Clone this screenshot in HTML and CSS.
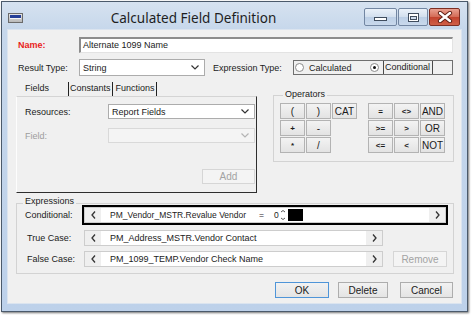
FILE: index.html
```html
<!DOCTYPE html>
<html lang="en">
<head>
    <meta charset="UTF-8">
    <title>Calculated Field Definition</title>
    <link rel="stylesheet" href="styles.css">
</head>
<body>
    <div class="window">
        <div class="titlebar">
            <div class="app-icon"><span></span></div>
            <div class="title">Calculated Field Definition</div>
            <div class="caption-btns">
                <div class="cap-btn cap-min">
                    <svg width="13" height="4"><rect x="0.5" y="0.5" width="12" height="3" fill="#fff" stroke="#404d5e"/></svg>
                </div>
                <div class="cap-btn cap-max">
                    <svg width="11" height="9"><rect x="0.5" y="0.5" width="10" height="8" fill="#fff" stroke="#404d5e"/><rect x="2.5" y="3.5" width="6" height="3" fill="#cfdcec" stroke="#404d5e"/></svg>
                </div>
                <div class="cap-btn cap-close">
                    <svg width="16" height="12"><path d="M3 2 L13 10 M13 2 L3 10" stroke="#5b1c12" stroke-width="4.2" stroke-linecap="round"/><path d="M3 2 L13 10 M13 2 L3 10" stroke="#fff" stroke-width="2.4" stroke-linecap="round"/></svg>
                </div>
            </div>
        </div>

        <div class="content">
            <div class="form-row name-row">
                <label class="form-label required">Name:</label>
                <div class="textbox">Alternate 1099 Name</div>
            </div>

            <div class="form-row type-row">
                <label class="form-label">Result Type:</label>
                <div class="dropdown type-select">
                    <span>String</span>
                    <svg width="8" height="5"><polyline points="0.5,0.5 4,4 7.5,0.5" fill="none" stroke="#333" stroke-width="1.2"/></svg>
                </div>
                <label class="expr-type-label">Expression Type:</label>
                <div class="radio-group">
                    <div class="radio-opt first">
                        <span class="radio"></span>
                        <span class="radio-text">Calculated</span>
                    </div>
                    <div class="radio-opt">
                        <span class="radio checked"></span>
                        <span class="radio-text framed">Conditional</span>
                    </div>
                </div>
            </div>

            <div class="middle">
                <div class="tabs-col">
                    <div class="tab-strip">
                        <span class="tab tab-active">Fields</span>
                        <span class="tab tab-constants">Constants</span>
                        <span class="tab tab-functions">Functions</span>
                    </div>
                    <div class="tab-panel">
                        <div class="panel-row">
                            <label class="panel-label">Resources:</label>
                            <div class="dropdown panel-select">
                                <span>Report Fields</span>
                                <svg width="8" height="5"><polyline points="0.5,0.5 4,4 7.5,0.5" fill="none" stroke="#333" stroke-width="1.2"/></svg>
                            </div>
                        </div>
                        <div class="panel-row field-row">
                            <label class="panel-label muted">Field:</label>
                            <div class="dropdown panel-select disabled-select">
                                <span></span>
                                <svg width="8" height="5"><polyline points="0.5,0.5 4,4 7.5,0.5" fill="none" stroke="#b4b4b4" stroke-width="1.2"/></svg>
                            </div>
                        </div>
                        <div class="panel-actions">
                            <button class="btn btn-disabled add-btn" disabled>Add</button>
                        </div>
                    </div>
                </div>

                <div class="group operators">
                    <span class="legend">Operators</span>
                    <div class="op-grid">
                        <button class="op">(</button>
                        <button class="op">)</button>
                        <button class="op word">CAT</button>
                        <span></span>
                        <button class="op sym">=</button>
                        <button class="op sym">&lt;&gt;</button>
                        <button class="op word">AND</button>

                        <button class="op sym">+</button>
                        <button class="op">-</button>
                        <span></span>
                        <span></span>
                        <button class="op sym">&gt;=</button>
                        <button class="op sym">&gt;</button>
                        <button class="op word">OR</button>

                        <button class="op sym">*</button>
                        <button class="op">/</button>
                        <span></span>
                        <span></span>
                        <button class="op sym">&lt;=</button>
                        <button class="op sym">&lt;</button>
                        <button class="op word">NOT</button>
                    </div>
                </div>
            </div>

            <div class="group expressions">
                <span class="legend">Expressions</span>
                <div class="expr-row">
                    <label class="expr-label">Conditional:</label>
                    <div class="expr-box cond-box">
                        <span class="expr-arrow"><svg width="5" height="8"><polyline points="4,0.5 1,4 4,7.5" fill="none" stroke="#333" stroke-width="1.3"/></svg></span>
                        <span class="expr-text cond-text">PM_Vendor_MSTR.Revalue Vendor<span class="op-eq">=</span><span class="op-val">0</span><svg class="spin" width="6" height="12"><path d="M1 3 L3 1.5 L5 3 M1 9 L3 10.5 L5 9" fill="none" stroke="#444" stroke-width="0.9"/></svg><span class="caret-block"></span></span>
                        <span class="expr-arrow"><svg width="5" height="8"><polyline points="1,0.5 4,4 1,7.5" fill="none" stroke="#333" stroke-width="1.3"/></svg></span>
                    </div>
                </div>
                <div class="expr-row true-row">
                    <label class="expr-label indent">True Case:</label>
                    <div class="expr-box case-box">
                        <span class="expr-arrow"><svg width="5" height="8"><polyline points="4,0.5 1,4 4,7.5" fill="none" stroke="#333" stroke-width="1.3"/></svg></span>
                        <span class="expr-text">PM_Address_MSTR.Vendor Contact</span>
                        <span class="expr-arrow"><svg width="5" height="8"><polyline points="1,0.5 4,4 1,7.5" fill="none" stroke="#333" stroke-width="1.3"/></svg></span>
                    </div>
                </div>
                <div class="expr-row false-row">
                    <label class="expr-label indent">False Case:</label>
                    <div class="expr-box case-box">
                        <span class="expr-arrow"><svg width="5" height="8"><polyline points="4,0.5 1,4 4,7.5" fill="none" stroke="#333" stroke-width="1.3"/></svg></span>
                        <span class="expr-text">PM_1099_TEMP.Vendor Check Name</span>
                        <span class="expr-arrow"><svg width="5" height="8"><polyline points="1,0.5 4,4 1,7.5" fill="none" stroke="#333" stroke-width="1.3"/></svg></span>
                    </div>
                    <button class="btn btn-disabled remove-btn" disabled>Remove</button>
                </div>
            </div>

            <div class="dialog-buttons">
                <button class="btn btn-default ok-btn">OK</button>
                <button class="btn delete-btn">Delete</button>
                <button class="btn cancel-btn">Cancel</button>
            </div>
        </div>
    </div>
</body>
</html>
```

FILE: styles.css
```css
* {
    box-sizing: border-box;
}
body {
    margin: 0;
    width: 473px;
    height: 315px;
    overflow: hidden;
    background-color: #fff;
    font-family: "Liberation Sans", Arial, sans-serif;
    font-size: 9px;
    color: #1b1b1b;
}

/* window frame */
.window {
    margin: 1px 0 0 1px;
    width: 467px;
    height: 311px;
    border: 1px solid #4b5a6b;
    padding: 0 5px 7px 5px;
    display: flex;
    flex-direction: column;
    background: linear-gradient(to bottom, #d6e2f0 0, #c6d7eb 28px, #bdd1ea 100%);
    box-shadow: 1px 1px 2px rgba(0, 0, 0, 0.55);
}
.titlebar {
    height: 27px;
    padding-top: 5px;
    display: flex;
    align-items: center;
}
.app-icon {
    width: 15px;
    height: 10px;
    margin-left: 1px;
    border: 1px solid #6b6b6b;
    background: linear-gradient(#e4e4e4, #b9b9b9);
    padding: 1px 1px 0 1px;
}
.app-icon span {
    display: block;
    height: 3px;
    background-color: #253f98;
    border-bottom: 1px solid #f4f4f4;
    box-sizing: content-box;
}
.title {
    flex: 1;
    text-align: center;
    font-family: "Noto Sans", "Open Sans", sans-serif;
    font-size: 13.5px;
    color: #1e1e1e;
    line-height: 18px;
}
.caption-btns {
    align-self: flex-start;
    margin-top: 1px;
    margin-right: 2px;
    display: flex;
    gap: 1px;
}
.cap-btn {
    height: 18px;
    display: flex;
    align-items: center;
    justify-content: center;
    border: 1px solid #7286a2;
    border-radius: 2px;
    background: linear-gradient(#eaf1f9, #d2dfee 50%, #bccfe6 51%, #c9d9ec);
}
.cap-min {
    width: 33px;
    padding-top: 4px;
}
.cap-max {
    width: 30px;
}
.cap-close {
    width: 31px;
    border-color: #7d2f24;
    background: linear-gradient(#e9a090, #d36a55 50%, #c2432e 51%, #cf5f47);
}

/* dialog body */
.content {
    flex: 1;
    background-color: #f0f0f0;
    border: 1px solid #dbe4ef;
    padding: 0 7px 0 8px;
}
.form-row {
    display: flex;
    align-items: center;
}
.name-row {
    margin-top: 7px;
    height: 16px;
}
.type-row {
    margin-top: 6px;
    height: 17px;
}
.form-label {
    width: 63px;
    padding-left: 2px;
}
.required {
    color: #e8221c;
    font-weight: bold;
}
.textbox {
    width: 374px;
    height: 16px;
    background-color: #fff;
    border-style: solid;
    border-width: 2px 1px 1px 2px;
    border-color: #8c8c8c #e3e3e3 #e3e3e3 #8c8c8c;
    padding-left: 2px;
    line-height: 13px;
}
.dropdown {
    display: flex;
    align-items: center;
    justify-content: space-between;
    background-color: #fff;
    border: 1px solid #acacac;
    padding: 0 5px 0 3px;
}
.type-select {
    width: 126px;
    height: 17px;
}
.expr-type-label {
    margin-left: 8px;
    width: 80px;
}
.radio-group {
    width: 160px;
    height: 15px;
    border: 1px solid #6f6f6f;
    padding-left: 1px;
    display: flex;
}
.radio-opt {
    display: flex;
    align-items: center;
}
.radio-opt.first {
    width: 75px;
}
.radio {
    width: 9px;
    height: 9px;
    border-radius: 50%;
    border: 1px solid #8b8b8b;
    background-color: #fff;
    display: flex;
    align-items: center;
    justify-content: center;
}
.radio.checked::after {
    content: "";
    width: 3px;
    height: 3px;
    border-radius: 50%;
    background-color: #111;
}
.radio-text {
    margin-left: 5px;
}
.radio-text.framed {
    margin-left: 4px;
    align-self: stretch;
    width: 50px;
    line-height: 13px;
    padding-left: 1px;
    border-left: 1px solid #4a4a4a;
    border-right: 1px solid #4a4a4a;
}

/* tabs + operators */
.middle {
    margin-top: 4px;
    display: flex;
    gap: 16px;
}
.tabs-col {
    width: 241px;
}
.tab-strip {
    height: 16px;
    display: flex;
    align-items: flex-end;
}
.tab {
    height: 14px;
    line-height: 13px;
}
.tab-active {
    width: 52px;
    padding-left: 9px;
}
.tab-constants {
    padding: 0 1px;
    border-left: 1px solid #222;
    border-right: 1px solid #222;
}
.tab-functions {
    padding: 0 1px 0 3px;
    border-right: 1px solid #222;
}
.tab-panel {
    height: 97px;
    border-style: solid;
    border-width: 1px;
    border-color: #d4d4d4 #2e2e2e #2e2e2e #fdfdfd;
    padding: 7px 1px 0 8px;
}
.panel-row {
    display: flex;
    align-items: center;
    height: 15px;
}
.field-row {
    margin-top: 9px;
}
.panel-label {
    width: 83px;
}
.muted {
    color: #9d9d9d;
}
.panel-select {
    width: 147px;
    height: 15px;
}
.disabled-select {
    background-color: #f4f4f4;
    border-color: #d9d9d9;
}
.panel-actions {
    margin-top: 26px;
    display: flex;
    justify-content: flex-end;
}

.group {
    position: relative;
    border: 1px solid #d3d3d3;
}
.legend {
    position: absolute;
    left: 9px;
    top: -7px;
    padding: 0 2px;
    line-height: 11px;
    background-color: #f0f0f0;
}
.operators {
    width: 181px;
    height: 67px;
    margin-top: 15px;
    padding: 7px 0 0 6px;
}
.op-grid {
    display: grid;
    grid-template-columns: 25px 25px 25px 9px 25px 25px 25px;
    grid-auto-rows: 16px;
    column-gap: 1px;
    row-gap: 1px;
}
.op {
    padding: 0;
    border: 1px solid #b3b3b3;
    background: linear-gradient(#f3f3f3, #e3e3e3);
    font-family: inherit;
    font-size: 10px;
    color: #1b1b1b;
    line-height: 13px;
}
.op.sym {
    font-size: 8px;
    font-weight: bold;
}

/* expressions */
.expressions {
    margin-top: 10px;
    height: 71px;
    padding: 3px 0 0 8px;
}
.expressions .legend {
    left: 6px;
    top: -8px;
}
.expr-row {
    display: flex;
    align-items: center;
    height: 16px;
}
.true-row {
    margin-top: 7px;
}
.false-row {
    margin-top: 5px;
}
.expr-label {
    width: 59px;
}
.expr-label.indent {
    padding-left: 2px;
}
.expr-box {
    display: flex;
    height: 16px;
    background-color: #fff;
    border: 1px solid #cdcdcd;
}
.cond-box {
    width: 362px;
    outline: 2px solid #000;
}
.case-box {
    width: 299px;
}
.expr-arrow {
    width: 16px;
    display: flex;
    align-items: center;
    justify-content: center;
    background-color: #efefef;
}
.expr-text {
    flex: 1;
    display: flex;
    align-items: center;
    padding-left: 9px;
    white-space: nowrap;
    overflow: hidden;
}
.cond-text {
    font-size: 8.5px;
}
.op-eq {
    margin-left: 13px;
}
.op-val {
    margin-left: 10px;
}
.spin {
    margin-left: 1px;
}
.caret-block {
    width: 15px;
    height: 12px;
    margin-left: 2px;
    background-color: #000;
}

/* buttons */
.btn {
    height: 16px;
    padding: 0;
    border: 1px solid #adadad;
    background: linear-gradient(#f2f2f2, #e4e4e4);
    font-family: inherit;
    font-size: 10px;
    color: #1b1b1b;
}
.btn-default {
    border-color: #4f95d8;
}
.btn-disabled {
    background: #f4f4f4;
    border-color: #d6d6d6;
    color: #a3a3a3;
}
.add-btn {
    width: 53px;
    height: 15px;
}
.remove-btn {
    margin-left: 10px;
    width: 54px;
}
.dialog-buttons {
    margin-top: 8px;
    padding-right: 1px;
    display: flex;
    justify-content: flex-end;
}
.ok-btn {
    width: 54px;
}
.delete-btn {
    width: 50px;
    margin-left: 9px;
}
.cancel-btn {
    width: 53px;
    margin-left: 12px;
}
```
